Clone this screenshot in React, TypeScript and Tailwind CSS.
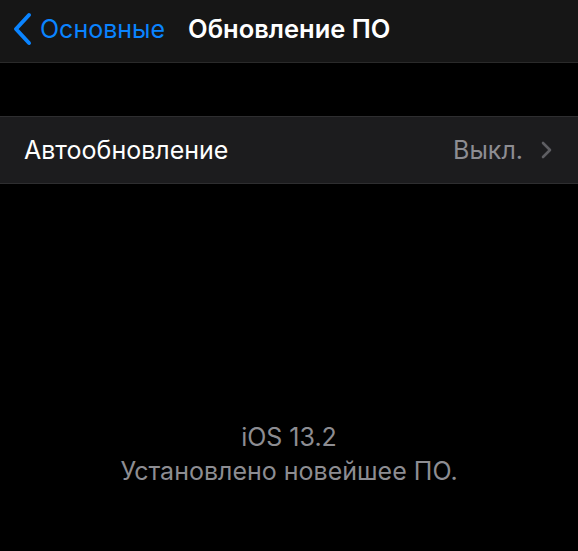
export default function App() {
  return (
    <div
      className="w-[578px] h-[551px] bg-black overflow-hidden"
      style={{ fontFamily: 'Inter, "Noto Sans", sans-serif' }}
    >
      {/* navigation bar */}
      <div className="h-[63px] bg-[#161616] border-b border-[#2a2a2a] flex items-center pb-[4px]">
        <div className="flex items-center pl-[13px] text-[#0a84ff]">
          <svg width="20" height="34" viewBox="0 0 20 34" fill="none">
            <path d="M16 3 L3 17 L16 31" stroke="#0a84ff" strokeWidth="4" strokeLinecap="round" strokeLinejoin="round" />
          </svg>
          <span className="ml-[7px] text-[25px] leading-none">Основные</span>
        </div>
        <span className="ml-[23px] text-[25.5px] font-semibold text-white leading-none">Обновление ПО</span>
      </div>

      <div className="h-[53px]" />

      {/* settings row */}
      <div className="h-[68px] bg-[#1c1c1e] border-y border-[#2e2e30] flex items-center justify-between pl-[24px] pr-[26px]">
        <span className="text-[25px] text-white leading-none">Автообновление</span>
        <div className="flex items-center gap-[18px]">
          <span className="text-[25px] text-[#8d8d92] leading-none">Выкл.</span>
          <svg width="11" height="18" viewBox="0 0 11 18" fill="none">
            <path d="M2 2 L9 9 L2 16" stroke="#5e5e62" strokeWidth="2.6" strokeLinecap="round" strokeLinejoin="round" />
          </svg>
        </div>
      </div>

      {/* version info */}
      <div className="pt-[236px] flex flex-col items-center text-[#8d8d92] text-[25px] leading-[34px]">
        <span>iOS 13.2</span>
        <span>Установлено новейшее ПО.</span>
      </div>
    </div>
  );
}
